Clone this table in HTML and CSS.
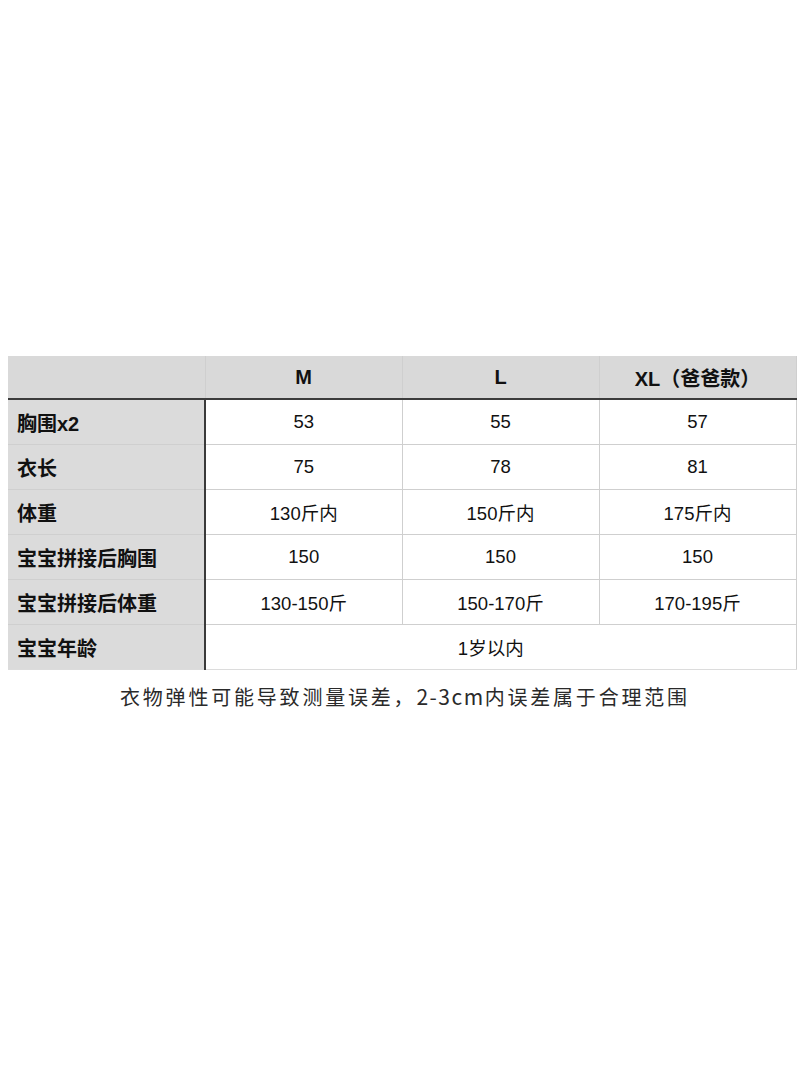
FILE: index.html
```html
<!DOCTYPE html>
<html lang="zh">
<head>
<meta charset="utf-8">
<link rel="stylesheet" href="styles.css">
</head>
<body>
<div class="page">
  <table class="size">
    <colgroup><col><col><col><col></colgroup>
    <thead>
      <tr><th class="corner"></th><th>M</th><th>L</th><th>XL（爸爸款）</th></tr>
    </thead>
    <tbody>
      <tr><th class="label">胸围x2</th><td>53</td><td>55</td><td>57</td></tr>
      <tr><th class="label">衣长</th><td>75</td><td>78</td><td>81</td></tr>
      <tr><th class="label">体重</th><td>130斤内</td><td>150斤内</td><td>175斤内</td></tr>
      <tr><th class="label">宝宝拼接后胸围</th><td>150</td><td>150</td><td>150</td></tr>
      <tr><th class="label">宝宝拼接后体重</th><td>130-150斤</td><td>150-170斤</td><td>170-195斤</td></tr>
      <tr><th class="label">宝宝年龄</th><td colspan="3" class="span">1岁以内</td></tr>
    </tbody>
  </table>
  <p class="note">衣物弹性可能导致测量误差，<span class="latin">2-3cm</span>内误差属于合理范围</p>
</div>
</body>
</html>
```
FILE: styles.css
```css
html, body {
  margin: 0;
  padding: 0;
  background: #ffffff;
}
body {
  font-family: "Liberation Sans", "Noto Sans CJK SC", sans-serif;
  color: #111111;
}
.page {
  padding-top: 356px;
  padding-left: 8px;
}
.size {
  border-collapse: collapse;
  table-layout: fixed;
  width: 788px;
}
.size col {
  width: 197px;
}
.size th, .size td {
  border: 1px solid #cfcfcf;
  padding: 0;
  height: 44px;
  text-align: center;
  vertical-align: middle;
}
.size thead th {
  background: #d9d9d9;
  font-size: 20px;
  font-weight: bold;
  height: 42px;
  border-bottom: 2px solid #3c3c3c;
  border-top: none;
}
.size thead th.corner {
  border-left: none;
}
.size tbody td {
  font-size: 18.5px;
  font-weight: normal;
  background: #ffffff;
}
.size tbody th.label {
  background: #dbdbdb;
  text-align: left;
  padding-left: 9px;
  font-size: 20px;
  font-weight: bold;
  border-right: 2px solid #3a3a3a;
  border-left: none;
}
.size tbody tr:last-child th,
.size tbody tr:last-child td {
  border-bottom: 1px solid #dcdcdc;
}
.size td.span {
  padding-right: 20px;
}
.note {
  margin: 11px 0 0 0;
  padding-left: 112px;
  font-family: "Noto Sans CJK SC", sans-serif;
  font-size: 20px;
  letter-spacing: 2.8px;
  color: #2a2a2a;
  line-height: 30px;
}
.note .latin {
  letter-spacing: 1.5px;
  font-size: 21px;
}
```
